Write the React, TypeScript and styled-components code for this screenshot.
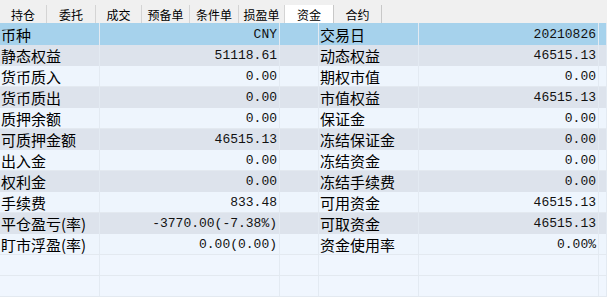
import React from 'react';
import styled, { createGlobalStyle } from 'styled-components';

const GlobalStyle = createGlobalStyle`
  html, body {
    margin: 0;
    padding: 0;
    background: #f0f6fe;
    overflow: hidden;
  }
  body {
    font-family: "Noto Sans CJK SC", "Liberation Sans", sans-serif;
    color: #000;
  }
`;

const Page = styled.div`
  width: 607px;
  height: 297px;
  display: flex;
  flex-direction: column;
  background: #f0f6fe;
`;

// Tab bar
const TabBar = styled.div`
  height: 23px;
  display: flex;
  align-items: flex-end;
  background: #f0f0f0;
  box-sizing: border-box;
`;

const Tab = styled.div<{ $w: number; $active?: boolean; $last?: boolean }>`
  width: ${({ $w }) => $w}px;
  height: 18px;
  display: flex;
  align-items: center;
  justify-content: center;
  font-size: 12px;
  line-height: 1;
  background: ${({ $active }) => ($active ? '#ffffff' : 'transparent')};
  border-right: 1px solid ${({ $active, $last }) => ($active || $last ? '#c8c8c8' : '#d4d4d4')};
  box-sizing: border-box;
  padding-top: 2px;
`;

const TabFill = styled.div`
  flex: 1;
  height: 100%;
`;

// Grid
const Row = styled.div<{ $kind: 'head' | 'even' | 'odd' | 'empty'; $h?: number }>`
  display: grid;
  grid-template-columns: 100px 180px 39px 100px 180px 8px;
  height: ${({ $h }) => $h ?? 21}px;
  background: ${({ $kind }) =>
    $kind === 'head' ? '#a6d2ec' : $kind === 'even' ? '#dde3ec' : $kind === 'odd' ? '#eef5fd' : '#f0f6fe'};
  border-bottom: ${({ $kind }) => ($kind === 'empty' || $kind === 'odd' ? '1px solid #e3e9f0' : 'none')};
  box-sizing: border-box;
`;

const Cell = styled.div`
  border-right: 1px solid #e3eaf2;
  display: flex;
  align-items: center;
  overflow: hidden;
  white-space: nowrap;
`;

const Label = styled(Cell)`
  font-size: 15px;
  padding-left: 1px;
`;

const Value = styled(Cell)`
  justify-content: flex-end;
  padding-right: 2px;
  font-family: "Liberation Mono", "DejaVu Sans Mono", monospace;
  font-size: 13px;
  color: #111;
`;

const Gap = styled(Cell)``;

const tabs = [
  { name: '持仓', w: 47 },
  { name: '委托', w: 49 },
  { name: '成交', w: 46 },
  { name: '预备单', w: 48 },
  { name: '条件单', w: 49 },
  { name: '损盈单', w: 46 },
  { name: '资金', w: 49, active: true },
  { name: '合约', w: 48 },
];

const rows: [string, string, string, string][] = [
  ['静态权益', '51118.61', '动态权益', '46515.13'],
  ['货币质入', '0.00', '期权市值', '0.00'],
  ['货币质出', '0.00', '市值权益', '46515.13'],
  ['质押余额', '0.00', '保证金', '0.00'],
  ['可质押金额', '46515.13', '冻结保证金', '0.00'],
  ['出入金', '0.00', '冻结资金', '0.00'],
  ['权利金', '0.00', '冻结手续费', '0.00'],
  ['手续费', '833.48', '可用资金', '46515.13'],
  ['平仓盈亏(率)', '-3770.00(-7.38%)', '可取资金', '46515.13'],
  ['盯市浮盈(率)', '0.00(0.00)', '资金使用率', '0.00%'],
];

export default function App() {
  return (
    <Page>
      <GlobalStyle />
      <TabBar>
        {tabs.map((t, i) => (
          <Tab key={t.name} $w={t.w} $active={t.active} $last={i === tabs.length - 1}>
            {t.name}
          </Tab>
        ))}
        <TabFill />
      </TabBar>

      <Row $kind="head" $h={22}>
        <Label>币种</Label>
        <Value>CNY</Value>
        <Gap />
        <Label>交易日</Label>
        <Value>20210826</Value>
        <Gap />
      </Row>

      {rows.map((r, i) => (
        <Row key={r[0]} $kind={i % 2 === 0 ? 'even' : 'odd'}>
          <Label>{r[0]}</Label>
          <Value>{r[1]}</Value>
          <Gap />
          <Label>{r[2]}</Label>
          <Value>{r[3]}</Value>
          <Gap />
        </Row>
      ))}

      <Row $kind="empty">
        <Cell />
        <Cell />
        <Cell />
        <Cell />
        <Cell />
        <Cell />
      </Row>
      <Row $kind="empty">
        <Cell />
        <Cell />
        <Cell />
        <Cell />
        <Cell />
        <Cell />
      </Row>
    </Page>
  );
}
